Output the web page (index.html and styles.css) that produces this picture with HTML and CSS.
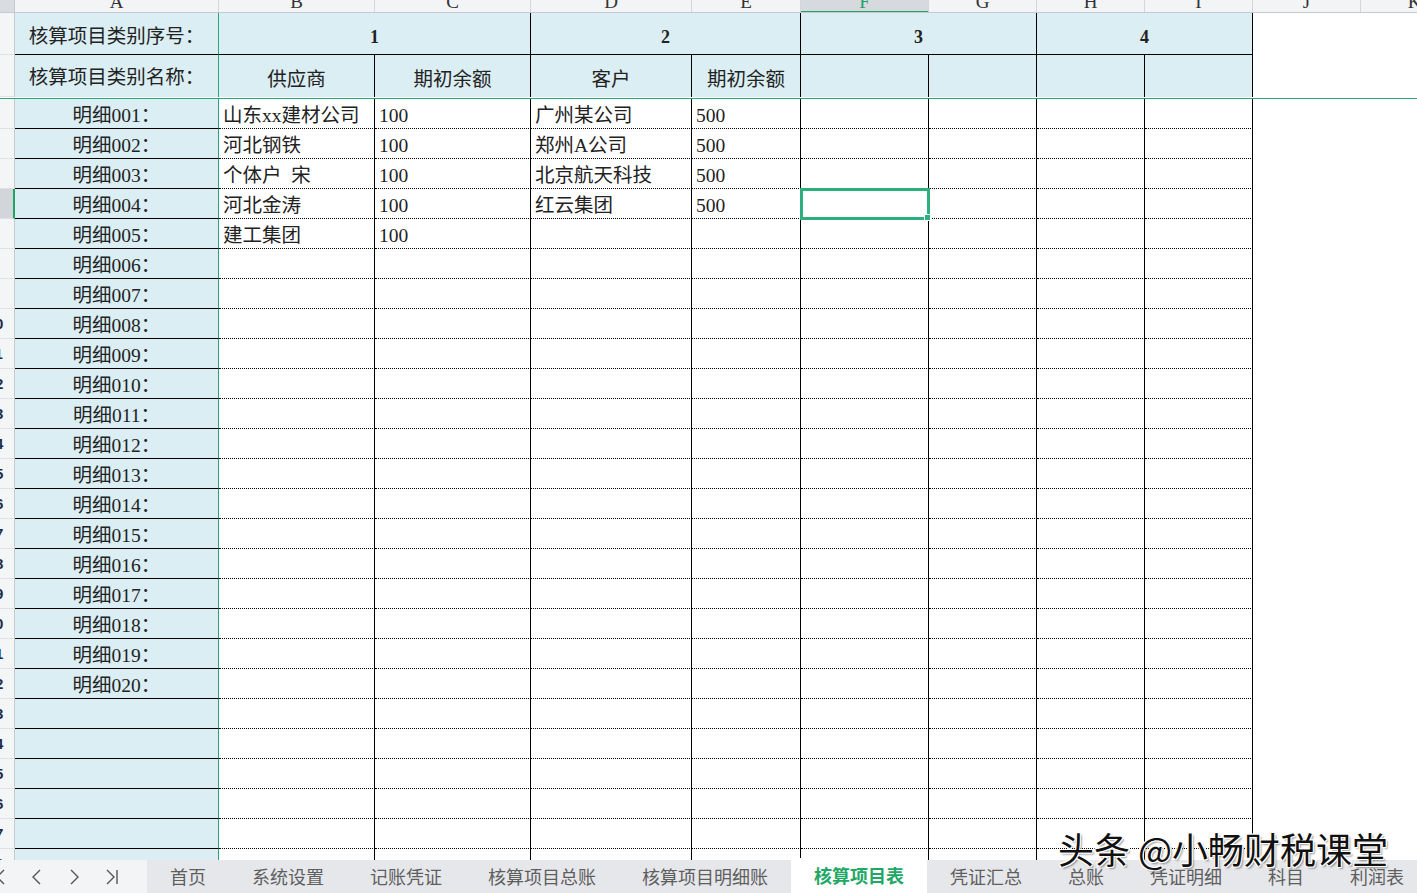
FILE: index.html
```html
<!DOCTYPE html>
<html lang="zh-CN">
<head>
    <meta charset="UTF-8">
    <title>核算项目表</title>
    <link rel="stylesheet" href="styles.css">
</head>
<body>
    <div class="sheet">
        <!-- column letters -->
        <div class="colhead">
            <div class="corner"></div>
            <div class="ch">A</div>
            <div class="ch">B</div>
            <div class="ch">C</div>
            <div class="ch">D</div>
            <div class="ch">E</div>
            <div class="ch active">F</div>
            <div class="ch">G</div>
            <div class="ch">H</div>
            <div class="ch">I</div>
            <div class="ch">J</div>
            <div class="ch">K</div>
        </div>

        <!-- header rows -->
        <div class="row r1">
            <div class="rh"><span>1</span></div>
            <div class="a">核算项目类别序号：</div>
            <div class="h num span2">1</div>
            <div class="h num span2">2</div>
            <div class="h num span2">3</div>
            <div class="h num span2">4</div>
        </div>
        <div class="row r2">
            <div class="rh"><span>2</span></div>
            <div class="a">核算项目类别名称：</div>
            <div class="h">供应商</div>
            <div class="h">期初余额</div>
            <div class="h">客户</div>
            <div class="h">期初余额</div>
            <div class="h"></div>
            <div class="h"></div>
            <div class="h"></div>
            <div class="h"></div>
        </div>

        <!-- detail rows -->
        <div class="row"><div class="rh"><span>3</span></div><div class="a">明细001：</div><div class="d">山东xx建材公司</div><div class="d">100</div><div class="d">广州某公司</div><div class="d">500</div><div class="d"></div><div class="d"></div><div class="d"></div><div class="d"></div></div>
        <div class="row"><div class="rh"><span>4</span></div><div class="a">明细002：</div><div class="d">河北钢铁</div><div class="d">100</div><div class="d">郑州A公司</div><div class="d">500</div><div class="d"></div><div class="d"></div><div class="d"></div><div class="d"></div></div>
        <div class="row"><div class="rh"><span>5</span></div><div class="a">明细003：</div><div class="d">个体户&nbsp;&nbsp;宋</div><div class="d">100</div><div class="d">北京航天科技</div><div class="d">500</div><div class="d"></div><div class="d"></div><div class="d"></div><div class="d"></div></div>
        <div class="row"><div class="rh current"><span>6</span></div><div class="a">明细004：</div><div class="d">河北金涛</div><div class="d">100</div><div class="d">红云集团</div><div class="d">500</div><div class="d selected"></div><div class="d"></div><div class="d"></div><div class="d"></div></div>
        <div class="row"><div class="rh"><span>7</span></div><div class="a">明细005：</div><div class="d">建工集团</div><div class="d">100</div><div class="d"></div><div class="d"></div><div class="d"></div><div class="d"></div><div class="d"></div><div class="d"></div></div>
        <div class="row"><div class="rh"><span>8</span></div><div class="a">明细006：</div><div class="d"></div><div class="d"></div><div class="d"></div><div class="d"></div><div class="d"></div><div class="d"></div><div class="d"></div><div class="d"></div></div>
        <div class="row"><div class="rh"><span>9</span></div><div class="a">明细007：</div><div class="d"></div><div class="d"></div><div class="d"></div><div class="d"></div><div class="d"></div><div class="d"></div><div class="d"></div><div class="d"></div></div>
        <div class="row"><div class="rh"><span>10</span></div><div class="a">明细008：</div><div class="d"></div><div class="d"></div><div class="d"></div><div class="d"></div><div class="d"></div><div class="d"></div><div class="d"></div><div class="d"></div></div>
        <div class="row"><div class="rh"><span>11</span></div><div class="a">明细009：</div><div class="d"></div><div class="d"></div><div class="d"></div><div class="d"></div><div class="d"></div><div class="d"></div><div class="d"></div><div class="d"></div></div>
        <div class="row"><div class="rh"><span>12</span></div><div class="a">明细010：</div><div class="d"></div><div class="d"></div><div class="d"></div><div class="d"></div><div class="d"></div><div class="d"></div><div class="d"></div><div class="d"></div></div>
        <div class="row"><div class="rh"><span>13</span></div><div class="a">明细011：</div><div class="d"></div><div class="d"></div><div class="d"></div><div class="d"></div><div class="d"></div><div class="d"></div><div class="d"></div><div class="d"></div></div>
        <div class="row"><div class="rh"><span>14</span></div><div class="a">明细012：</div><div class="d"></div><div class="d"></div><div class="d"></div><div class="d"></div><div class="d"></div><div class="d"></div><div class="d"></div><div class="d"></div></div>
        <div class="row"><div class="rh"><span>15</span></div><div class="a">明细013：</div><div class="d"></div><div class="d"></div><div class="d"></div><div class="d"></div><div class="d"></div><div class="d"></div><div class="d"></div><div class="d"></div></div>
        <div class="row"><div class="rh"><span>16</span></div><div class="a">明细014：</div><div class="d"></div><div class="d"></div><div class="d"></div><div class="d"></div><div class="d"></div><div class="d"></div><div class="d"></div><div class="d"></div></div>
        <div class="row"><div class="rh"><span>17</span></div><div class="a">明细015：</div><div class="d"></div><div class="d"></div><div class="d"></div><div class="d"></div><div class="d"></div><div class="d"></div><div class="d"></div><div class="d"></div></div>
        <div class="row"><div class="rh"><span>18</span></div><div class="a">明细016：</div><div class="d"></div><div class="d"></div><div class="d"></div><div class="d"></div><div class="d"></div><div class="d"></div><div class="d"></div><div class="d"></div></div>
        <div class="row"><div class="rh"><span>19</span></div><div class="a">明细017：</div><div class="d"></div><div class="d"></div><div class="d"></div><div class="d"></div><div class="d"></div><div class="d"></div><div class="d"></div><div class="d"></div></div>
        <div class="row"><div class="rh"><span>20</span></div><div class="a">明细018：</div><div class="d"></div><div class="d"></div><div class="d"></div><div class="d"></div><div class="d"></div><div class="d"></div><div class="d"></div><div class="d"></div></div>
        <div class="row"><div class="rh"><span>21</span></div><div class="a">明细019：</div><div class="d"></div><div class="d"></div><div class="d"></div><div class="d"></div><div class="d"></div><div class="d"></div><div class="d"></div><div class="d"></div></div>
        <div class="row"><div class="rh"><span>22</span></div><div class="a">明细020：</div><div class="d"></div><div class="d"></div><div class="d"></div><div class="d"></div><div class="d"></div><div class="d"></div><div class="d"></div><div class="d"></div></div>
        <div class="row"><div class="rh"><span>23</span></div><div class="a"></div><div class="d"></div><div class="d"></div><div class="d"></div><div class="d"></div><div class="d"></div><div class="d"></div><div class="d"></div><div class="d"></div></div>
        <div class="row"><div class="rh"><span>24</span></div><div class="a"></div><div class="d"></div><div class="d"></div><div class="d"></div><div class="d"></div><div class="d"></div><div class="d"></div><div class="d"></div><div class="d"></div></div>
        <div class="row"><div class="rh"><span>25</span></div><div class="a"></div><div class="d"></div><div class="d"></div><div class="d"></div><div class="d"></div><div class="d"></div><div class="d"></div><div class="d"></div><div class="d"></div></div>
        <div class="row"><div class="rh"><span>26</span></div><div class="a"></div><div class="d"></div><div class="d"></div><div class="d"></div><div class="d"></div><div class="d"></div><div class="d"></div><div class="d"></div><div class="d"></div></div>
        <div class="row"><div class="rh"><span>27</span></div><div class="a"></div><div class="d"></div><div class="d"></div><div class="d"></div><div class="d"></div><div class="d"></div><div class="d"></div><div class="d"></div><div class="d"></div></div>
        <div class="row"><div class="rh"><span>28</span></div><div class="a"></div><div class="d"></div><div class="d"></div><div class="d"></div><div class="d"></div><div class="d"></div><div class="d"></div><div class="d"></div><div class="d"></div></div>
    </div>

    <!-- sheet tabs -->
    <div class="tabbar">
        <div class="tabnav">
            <svg class="navicon" width="14" height="20" viewBox="0 0 14 20"><path d="M2 3v14M12 3L5 10l7 7" fill="none" stroke="#555" stroke-width="1.4"/></svg>
            <svg class="navicon" width="12" height="20" viewBox="0 0 12 20"><path d="M9 3L2 10l7 7" fill="none" stroke="#555" stroke-width="1.4"/></svg>
            <svg class="navicon" width="12" height="20" viewBox="0 0 12 20"><path d="M3 3l7 7-7 7" fill="none" stroke="#555" stroke-width="1.4"/></svg>
            <svg class="navicon" width="14" height="20" viewBox="0 0 14 20"><path d="M2 3l7 7-7 7M12 3v14" fill="none" stroke="#555" stroke-width="1.4"/></svg>
        </div>
        <div class="tabs">
            <div class="tab">首页</div>
            <div class="tab">系统设置</div>
            <div class="tab">记账凭证</div>
            <div class="tab">核算项目总账</div>
            <div class="tab">核算项目明细账</div>
            <div class="tab current">核算项目表</div>
            <div class="tab">凭证汇总</div>
            <div class="tab">总账</div>
            <div class="tab">凭证明细</div>
            <div class="tab">科目</div>
            <div class="tab">利润表</div>
        </div>
    </div>

    <div class="watermark">头条 @小畅财税课堂</div>
</body>
</html>
```

FILE: styles.css
```css
html, body {
    margin: 0;
    height: 100%;
    overflow: hidden;
    background-color: #fff;
    font-family: "Liberation Serif", "Noto Sans CJK SC", serif;
}
body {
    position: relative;
}
.sheet {
    height: 860px;
    overflow: hidden;
}
.colhead,
.row {
    display: grid;
    grid-template-columns: 15px 204px 156px 156px 161px 109px 128px 108px 108px 108px 108px 108px;
}

/* column letters */
.colhead {
    height: 13px;
    background-color: #f3f4f6;
    border-bottom: 1px solid #c6cad0;
    box-sizing: border-box;
    overflow: hidden;
}
.corner {
    background-color: #d9dce0;
    border-right: 1px solid #c6cad0;
}
.ch {
    border-right: 1px solid #d3d6db;
    text-align: center;
    font-size: 19px;
    line-height: 22px;
    margin-top: -9px;
    color: #333;
}
.ch.active {
    background-color: #d6d9de;
    color: #21a366;
    border-bottom: 2px solid #21a366;
    height: 20px;
}

/* rows */
.row {
    height: 30px;
    font-size: 19.5px;
    color: #222;
}
.row > div {
    box-sizing: border-box;
    overflow: hidden;
    white-space: nowrap;
}
.r1 {
    height: 42px;
    grid-template-rows: 42px;
}
.r2 {
    height: 43px;
    grid-template-rows: 42px;
    border-bottom: 1px solid #2aa677;
}

/* row numbers, scrolled partly out of view */
.rh {
    background-color: #f4f5f7;
    border-right: 1px solid #c6cad0;
    border-bottom: 1px solid #dfe1e5;
}
.rh span {
    display: block;
    width: 40px;
    margin-left: -25px;
    text-align: center;
    font-family: "Liberation Sans", sans-serif;
    font-weight: bold;
    font-size: 15px;
    line-height: 30px;
    color: #1d2b45;
}
.r1 .rh span,
.r2 .rh span {
    line-height: 42px;
}
.rh.current {
    background-color: #d2d5da;
    border-right: 2px solid #21a366;
}

.a {
    background-color: #daeef3;
    border-right: 1px solid #2aa677;
    border-bottom: 1px solid #000;
    display: flex;
    align-items: flex-end;
    justify-content: center;
    line-height: 24px;
}
.r1 .a,
.r1 .h {
    align-items: center;
    padding-top: 7px;
}
.r2 .a {
    align-items: center;
    padding-top: 3px;
    border-bottom: none;
}

.h {
    background-color: #daeef3;
    border-right: 1px solid #000;
    border-bottom: 1px solid #000;
    display: flex;
    align-items: center;
    justify-content: center;
    padding-top: 3px;
}
.r2 .h {
    border-bottom: none;
}
.h.num {
    font-weight: bold;
    font-size: 18px;
}
.span2 {
    grid-column: span 2;
}

.d {
    border-right: 1px solid #000;
    border-bottom: 1px dotted #000;
    padding-left: 4px;
    line-height: 24px;
    display: flex;
    align-items: flex-end;
}
.d.selected {
    position: relative;
    overflow: visible;
    outline: 3px solid #2eb07e;
    outline-offset: -2px;
}
.d.selected::after {
    content: "";
    position: absolute;
    right: -3px;
    bottom: -3px;
    width: 5px;
    height: 5px;
    background-color: #2eb07e;
    border: 1px solid #fff;
}

/* sheet tabs */
.tabbar {
    height: 33px;
    display: flex;
    align-items: flex-end;
    background-color: #e6e7ea;
    font-family: "Noto Sans CJK SC", sans-serif;
}
.tabnav {
    flex-shrink: 0;
    width: 155px;
    height: 33px;
    margin-left: -8px;
    background-color: #f3f4f6;
    display: flex;
    align-items: center;
    gap: 25px;
}
.navicon {
    display: block;
}
.tabs {
    display: flex;
    align-items: flex-end;
    flex-shrink: 0;
}
.tab {
    flex-shrink: 0;
    white-space: nowrap;
    padding: 0 23px;
    height: 33px;
    line-height: 33px;
    font-size: 18px;
    color: #5e5e5e;
}
.tab.current {
    height: 35px;
    line-height: 35px;
    background-color: #fff;
    color: #1fa866;
    font-weight: bold;
}

.watermark {
    position: absolute;
    left: 1058px;
    top: 822px;
    font-family: "Noto Sans CJK SC", sans-serif;
    font-size: 36px;
    color: #111;
    white-space: nowrap;
    text-shadow: 1px 1px 0 #fff, -1px -1px 0 #fff, 1px -1px 0 #fff, -1px 1px 0 #fff, 2px 2px 2px rgba(0,0,0,0.4);
}
```
